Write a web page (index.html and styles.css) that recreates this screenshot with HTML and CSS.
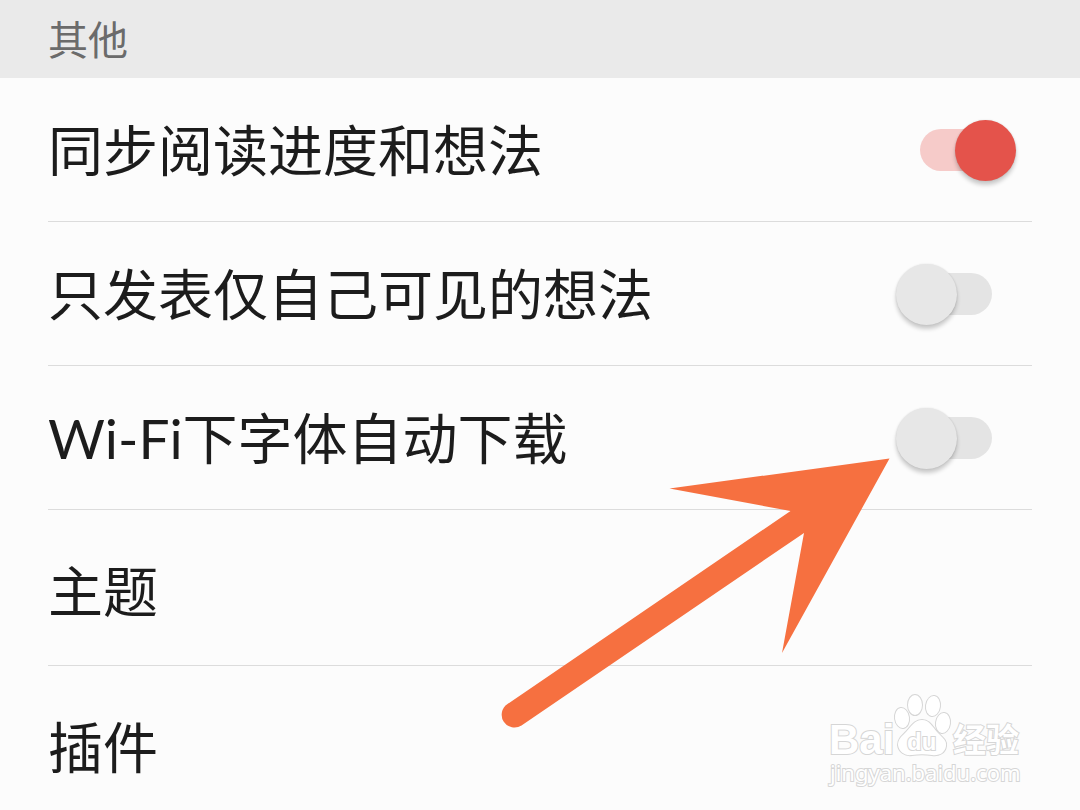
FILE: index.html
```html
<!DOCTYPE html>
<html lang="zh-CN">
<head>
    <meta charset="UTF-8">
    <meta name="viewport" content="width=device-width, initial-scale=1.0">
    <title>设置</title>
    <link rel="stylesheet" href="styles.css">
</head>
<body>
    <main class="settings">
        <h2 class="section-title">其他</h2>
        <div class="list">
            <div class="row">
                <label for="syncProgress">同步阅读进度和想法</label>
                <input type="checkbox" id="syncProgress" class="switch" checked>
            </div>
            <div class="row">
                <label for="privateThoughts">只发表仅自己可见的想法</label>
                <input type="checkbox" id="privateThoughts" class="switch">
            </div>
            <div class="row">
                <label for="wifiFonts">Wi-Fi下字体自动下载</label>
                <input type="checkbox" id="wifiFonts" class="switch">
            </div>
            <a class="row row-link" href="#theme">主题</a>
            <a class="row row-link" href="#plugins">插件</a>
        </div>

        <!-- arrow pointing at the Wi-Fi switch -->
        <svg class="arrow" width="400" height="280" viewBox="495 454 400 280" aria-hidden="true">
            <path d="M889.500 458.500L669.500 488.500L790.500 511L507.500 704A12.700 12.700 0 0 0 521.500 725.500L804 533L782 653Z"/>
        </svg>

        <svg class="watermark" width="204" height="100" viewBox="824 690 204 100">
            <g class="outline">
                <text class="brand" x="829" y="754">Bai</text>
                <path d="M922 720C930 720 933 728 938 733C943 738 947 741 946 746C945 753 939 756 932 755C925 754 919 754 912 755C905 756 899 752 898 745C898 739 902 736 906 732C911 727 914 720 922 720Z"/>
                <ellipse cx="902" cy="718" rx="7" ry="10" transform="rotate(-8 902 718)"/>
                <ellipse cx="915" cy="705" rx="7" ry="10"/>
                <ellipse cx="933" cy="706" rx="7" ry="10" transform="rotate(8 933 706)"/>
                <ellipse cx="943" cy="723" rx="7" ry="10" transform="rotate(8 943 723)"/>
                <text class="du" x="907" y="750">du</text>
                <text class="jingyan" x="953" y="752">经验</text>
                <text class="site" x="830" y="781">jingyan.baidu.com</text>
            </g>
        </svg>
    </main>
</body>
</html>
```

FILE: styles.css
```css
html {
    height    : 100%;
    box-sizing: border-box;
}
*, *::before, *::after {
    box-sizing: inherit;
}
body {
    height  : 100%;
    margin  : 0;
    overflow: hidden;

    color           : #212121;
    background-color: #fcfcfc;
    font-family     : Lato, "Noto Sans CJK SC", sans-serif;
}
.settings {
    position: relative;
}
.section-title {
    margin : 0;
    padding: 10px 48px 8px;

    color           : #6b6b6b;
    background-color: #eaeaea;

    font-size  : 40px;
    font-weight: 400;
    line-height: 60px;
}
.list {
    padding: 0 48px;
}
.row {
    display        : flex;
    align-items    : center;
    justify-content: space-between;

    min-height    : 144px;
    border-bottom : 1px solid #dcdcdc;

    color          : #1c1c1c;
    font-size      : 55px;
    line-height    : 78px;
    text-decoration: none;
}
.row-link {
    min-height : 156px;
    padding-top: 6px;
}
.switch {
    position: relative;
    width   : 72px;
    height  : 42px;
    margin  : 0 40px 0 24px;

    appearance      : none;
    background-color: #e4e4e4;
    border-radius   : 21px;
}
.switch::after {
    content : "";
    position: absolute;
    top     : -9px;
    left    : -24px;
    width   : 61px;
    height  : 61px;

    background-color: #e7e7e7;
    border-radius   : 50%;
    box-shadow      : 0 4px 4px rgba(0, 0, 0, 0.2), 0 0 2px rgba(0, 0, 0, 0.12);
}
.switch:checked {
    background-color: #f6cbc9;
}
.switch:checked::after {
    left            : 35px;
    background-color: #e4534b;
}
.arrow {
    position: absolute;
    top     : 454px;
    right   : 185px;

    fill          : #f67040;
    pointer-events: none;
}
.watermark {
    position: absolute;
    top     : 690px;
    right   : 52px;

    pointer-events: none;
}
.outline {
    fill        : #fff;
    stroke      : #d6d6d6;
    stroke-width: 2px;
    paint-order : stroke;
}
.brand {
    font: bold 42px "Liberation Sans", sans-serif;
}
.du {
    font: bold 24px "Liberation Sans", sans-serif;
}
.jingyan {
    font: 700 33px "Noto Sans CJK SC", sans-serif;
}
.site {
    font: 22px "Noto Sans", sans-serif;
}
```
